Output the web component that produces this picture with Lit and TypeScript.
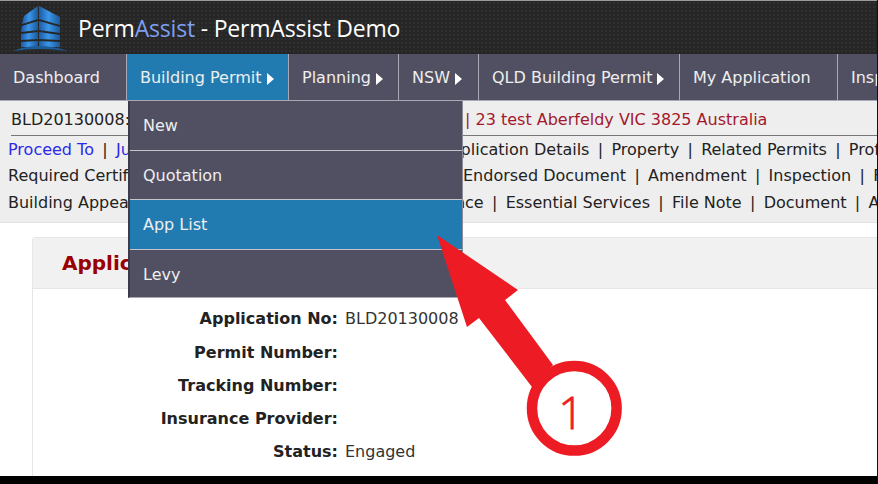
import { LitElement, html, css, svg } from 'lit';
import { customElement } from 'lit/decorators.js';

const navItems = [
  { label: 'Dashboard', width: 126 },
  { label: 'Building Permit', width: 161, arrow: true, active: true },
  { label: 'Planning', width: 109, arrow: true },
  { label: 'NSW', width: 79, arrow: true },
  { label: 'QLD Building Permit', width: 200, arrow: true },
  { label: 'My Application', width: 157 },
  { label: 'Inspection', width: 120 },
];

// shift = how far the right hand text starts left of the dropdown's right edge
const linkRows = [
  { left: ['Proceed To', 'Jump To'], shift: 23.5, right: ['Application Details', 'Property', 'Related Permits', 'Professionals'] },
  { left: ['Required Certificates'], shift: 0, right: ['Endorsed Document', 'Amendment', 'Inspection', 'Fees'] },
  { left: ['Building Appeal'], shift: 73.5, right: ['Compliance', 'Essential Services', 'File Note', 'Document', 'Audit'] },
];

const details = [
  { label: 'Application No:', value: 'BLD20130008' },
  { label: 'Permit Number:', value: '' },
  { label: 'Tracking Number:', value: '' },
  { label: 'Insurance Provider:', value: '' },
  { label: 'Status:', value: 'Engaged' },
];

const menu = ['New', 'Quotation', 'App List', 'Levy'];

@customElement('app-root')
export class AppRoot extends LitElement {
  static styles = css`
    :host {
      display: block;
      position: relative;
      width: 878px;
      height: 484px;
      overflow: hidden;
      background: #fff;
      font-family: 'DejaVu Sans', Verdana, sans-serif;
      font-size: 16px;
      color: #222;
    }
    .page {
      display: flex;
      flex-direction: column;
      height: 476px;
      overflow: hidden;
    }

    /* Top bar */
    .header {
      flex: none;
      height: 53px;
      border-top: 1px solid #9a9a9a;
      background-color: #262626;
      background-image: radial-gradient(#303030 1px, transparent 1px);
      background-size: 4px 4px;
      display: flex;
      align-items: center;
      padding-left: 13px;
      gap: 9px;
    }
    .title {
      font-family: 'Open Sans', sans-serif;
      font-size: 23px;
      color: #fff;
      white-space: nowrap;
      letter-spacing: -0.2px;
    }
    .title span {
      color: #7f9ff0;
    }

    /* Main nav */
    .nav {
      flex: none;
      height: 47px;
      display: flex;
      background: #515062;
      box-sizing: border-box;
      border-bottom: 1px solid #a9a9b4;
      overflow: hidden;
    }
    .nav-item {
      flex: none;
      box-sizing: border-box;
      display: flex;
      align-items: center;
      gap: 5px;
      padding: 1px 0 0 13px;
      color: #eee;
      border-right: 1px solid #a9a9b4;
      white-space: nowrap;
    }
    .nav-item.active {
      background: #227bb0;
    }
    .nav-item i {
      width: 0;
      height: 0;
      border-left: 7px solid #fff;
      border-top: 6.5px solid transparent;
      border-bottom: 6.5px solid transparent;
      margin-top: 2px;
    }

    /* Application strip */
    .strip {
      flex: none;
      height: 122px;
      box-sizing: border-box;
      background: #eeeeee;
      border-bottom: 1px solid #e2e2e2;
      padding-left: 8px;
      white-space: nowrap;
      overflow: hidden;
    }
    .strip-title,
    .link-row {
      display: flex;
      height: 27px;
      line-height: 27px;
    }
    .strip-title {
      height: 35px;
      line-height: 37px;
      margin-left: 3px;
      border-bottom: 1px solid #777;
      box-sizing: border-box;
    }
    .strip-title .link-cell.left {
      width: 117px;
    }
    .strip-title .address {
      color: #a3192c;
      margin-left: 2px;
    }
    .link-row.first {
      height: 26px;
    }
    .link-cell {
      overflow: hidden;
    }
    .link-cell.left {
      flex: none;
      width: 120px;
    }
    .link-cell.right {
      flex: none;
      width: 415px;
      margin-left: 335px;
    }
    .link.primary {
      color: #2a2ae8;
    }
    .sep {
      margin: 0 8.3px;
    }

    /* Card */
    .content {
      flex: 1;
      padding: 14px 0 0 32px;
      overflow: hidden;
    }
    .card {
      width: 900px;
      height: 300px;
      border: 1px solid #e6e6e6;
      border-radius: 3px 0 0 0;
      box-sizing: border-box;
    }
    .card-head {
      height: 51px;
      box-sizing: border-box;
      background: #f1f1f1;
      border-bottom: 1px solid #e6e6e6;
      padding-left: 29px;
      font-size: 20px;
      font-weight: bold;
      line-height: 51px;
      color: #990000;
    }
    .card-head span {
      display: block;
      width: 66px;
      overflow: hidden;
      white-space: nowrap;
    }
    .fields {
      display: grid;
      grid-template-columns: 305px auto;
      justify-content: start;
      column-gap: 7px;
      grid-auto-rows: 33.25px;
      padding-top: 13.4px;
      line-height: 33px;
    }
    .fields b {
      text-align: right;
      white-space: nowrap;
    }
    .fields span {
      color: #333;
      white-space: nowrap;
    }

    /* Dropdown over the nav */
    .dropdown {
      position: absolute;
      left: 128px;
      top: 101px;
      width: 335px;
      box-sizing: border-box;
      background: #515062;
      border-left: 2px solid #3b3b49;
      border-right: 1px solid #8c8c98;
      border-bottom: 1px solid #a9a9b4;
    }
    .dropdown div {
      height: 49.5px;
      box-sizing: border-box;
      line-height: 49px;
      padding-left: 13px;
      color: #eee;
      border-bottom: 1px solid #c4c4cc;
    }
    .dropdown div:last-child {
      height: 47.5px;
      border-bottom: none;
    }
    .dropdown div.active {
      background: #227bb0;
    }

    /* Annotation */
    .annotation {
      position: absolute;
      left: 0;
      top: 0;
    }
    .annotation text {
      font-family: 'Open Sans', sans-serif;
      font-weight: 300;
      font-size: 45px;
      fill: #ed1c24;
      stroke: #ed1c24;
      stroke-width: 0.8px;
    }

    .footer-edge {
      position: absolute;
      left: 0;
      right: 0;
      bottom: 0;
      height: 8px;
      background: #000;
    }
    .side-edge {
      position: absolute;
      right: 0;
      top: 0;
      bottom: 0;
      width: 1px;
      background: #111;
    }
  `;

  logo() {
    return svg`<svg width="56" height="53" viewBox="13 1 56 53">
      <defs>
        <linearGradient id="b" x1="0" x2="1" y1="0" y2="0">
          <stop offset="0" stop-color="#1c5aa6" />
          <stop offset="0.45" stop-color="#3b97ea" />
          <stop offset="1" stop-color="#1a5898" />
        </linearGradient>
      </defs>
      <g fill="url(#b)">
        <polygon points="39,6 60,17 60,25 39,19" />
        <polygon points="39,21 60,27 60,33 39,30" />
        <polygon points="39,32 60,35 60,40 39,39" />
        <polygon points="39,41 60,42 60,47 39,47" />
        <polygon points="38,6 24,16 22,24 38,19" />
        <polygon points="38,21 22,26 21,32 38,30" />
        <polygon points="38,32 21,34 21,40 38,39" />
        <polygon points="38,41 21,42 21,47 38,47" />
      </g>
      <path fill="#1f5c96" d="M13 51 Q38 41 68 51 Q38 47 13 51 Z" />
    </svg>`;
  }

  links(items: string[], primary = false) {
    return items.map(
      (l, i) => html`${i ? html`<span class="sep">|</span>` : ''}<span class="link ${primary ? 'primary' : ''}">${l}</span>`
    );
  }

  render() {
    return html`
      <div class="page">
        <div class="header">
          ${this.logo()}
          <div class="title">Perm<span>Assist</span> - PermAssist Demo</div>
        </div>
        <div class="nav">
          ${navItems.map(
            (n) => html`<div class="nav-item ${n.active ? 'active' : ''}" style="width:${n.width + 1}px">
              ${n.label}${n.arrow ? html`<i></i>` : ''}
            </div>`
          )}
        </div>
        <div class="strip">
          <div class="strip-title">
            <div class="link-cell left">BLD20130008:</div>
            <div class="link-cell right"><span class="address">| 23 test Aberfeldy VIC 3825 Australia</span></div>
          </div>
          ${linkRows.map(
            (r, idx) => html`<div class="link-row ${idx === 0 ? 'first' : ''}">
              <div class="link-cell left">${this.links(r.left, idx === 0)}</div>
              <div class="link-cell right">
                <div style="margin-left:${-r.shift}px">${this.links(r.right)}</div>
              </div>
            </div>`
          )}
        </div>
        <div class="content">
          <div class="card">
            <div class="card-head"><span>Application Details</span></div>
            <div class="fields">
              ${details.map((d) => html`<b>${d.label}</b><span>${d.value}</span>`)}
            </div>
          </div>
        </div>
      </div>

      <div class="dropdown">
        ${menu.map((m) => html`<div class=${m === 'App List' ? 'active' : ''}>${m}</div>`)}
      </div>

      <svg class="annotation" width="878" height="484" viewBox="0 0 878 484">
        <polygon fill="#ed1c24" points="437,235 518,290 505,300 553,365 532,387 479,318 467,327" />
        <circle cx="574.3" cy="408.3" r="42.3" fill="#fff" stroke="#ed1c24" stroke-width="10.5" />
        <text x="571" y="429" text-anchor="middle">1</text>
      </svg>

      <div class="footer-edge"></div>
      <div class="side-edge"></div>
    `;
  }
}
